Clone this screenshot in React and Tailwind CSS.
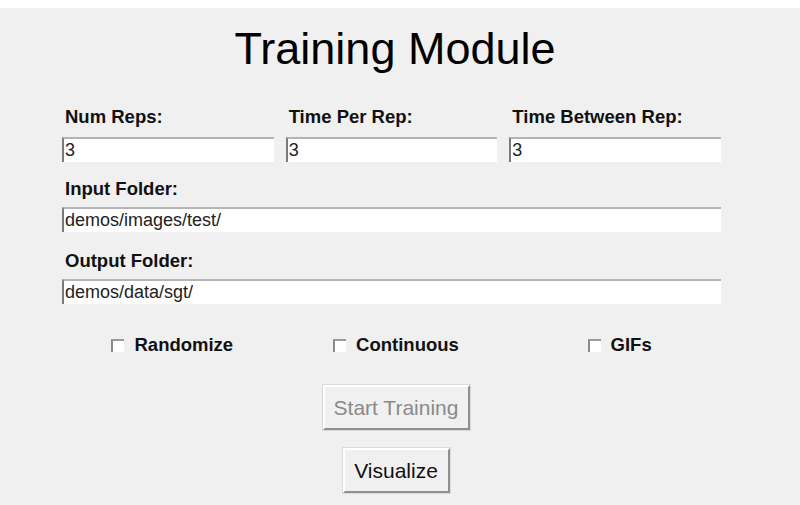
import React from "react";

const font = { fontFamily: '"Liberation Sans", Arial, sans-serif' };

function Label({ children, className = "" }) {
  return (
    <div className={"h-[20px] pl-[3px] text-[18.5px] leading-[20px] font-bold text-[#111] " + className}>
      {children}
    </div>
  );
}

function Entry({ value }) {
  return (
    <div className="h-[25px] bg-white border-t-2 border-l-2 border-t-[#b4b4b4] border-l-[#7a7a7a] pl-[1px] text-[18px] leading-[23px] text-[#222] whitespace-nowrap overflow-hidden">
      {value}
    </div>
  );
}

function Check({ label }) {
  return (
    <div className="flex items-center justify-center pl-[9px] h-[20px]">
      <div className="w-[13px] h-[13px] bg-white border-t-2 border-l-2 border-t-[#9a9a9a] border-l-[#8a8a8a] mt-[1px]" />
      <span className="ml-[10px] text-[18.5px] leading-[20px] font-bold text-[#111]">{label}</span>
    </div>
  );
}

export default function App() {
  return (
    <div style={font} className="w-[800px] h-[505px] bg-[#f0f0f0] border-t-8 border-white overflow-hidden">
      <div className="ml-[62px] w-[659px]">
        <div className="pt-[18px] pl-[7px] text-center text-[45px] leading-[45px] text-black">
          Training Module
        </div>
        <div className="mt-[36px] grid grid-cols-3 gap-x-[12px]">
          <Label>Num Reps:</Label>
          <Label>Time Per Rep:</Label>
          <Label>Time Between Rep:</Label>
          <div className="mt-[10px]"><Entry value="3" /></div>
          <div className="mt-[10px]"><Entry value="3" /></div>
          <div className="mt-[10px]"><Entry value="3" /></div>
        </div>
        <Label className="mt-[17px]">Input Folder:</Label>
        <div className="mt-[8px]"><Entry value="demos/images/test/" /></div>
        <Label className="mt-[19px]">Output Folder:</Label>
        <div className="mt-[8px]"><Entry value="demos/data/sgt/" /></div>
        <div className="mt-[31px] grid grid-cols-3 gap-x-[12px]">
          <Check label="Randomize" />
          <Check label="Continuous" />
          <Check label="GIFs" />
        </div>
        <div className="mt-[30px] flex flex-col items-center pl-[9px] gap-[18px]">
          <button className="w-[147px] h-[45px] bg-[#f0f0f0] border-2 border-t-white border-l-white border-r-[#8f8f8f] border-b-[#8f8f8f] shadow-[0_0_0_1px_#dadada] text-[21px] leading-[20px] text-[#8a8a8a]">
            Start Training
          </button>
          <button className="w-[107px] h-[45px] bg-[#f0f0f0] border-2 border-t-white border-l-white border-r-[#8f8f8f] border-b-[#8f8f8f] shadow-[0_0_0_1px_#dadada] text-[21px] leading-[20px] text-[#111]">
            Visualize
          </button>
        </div>
      </div>
    </div>
  );
}
